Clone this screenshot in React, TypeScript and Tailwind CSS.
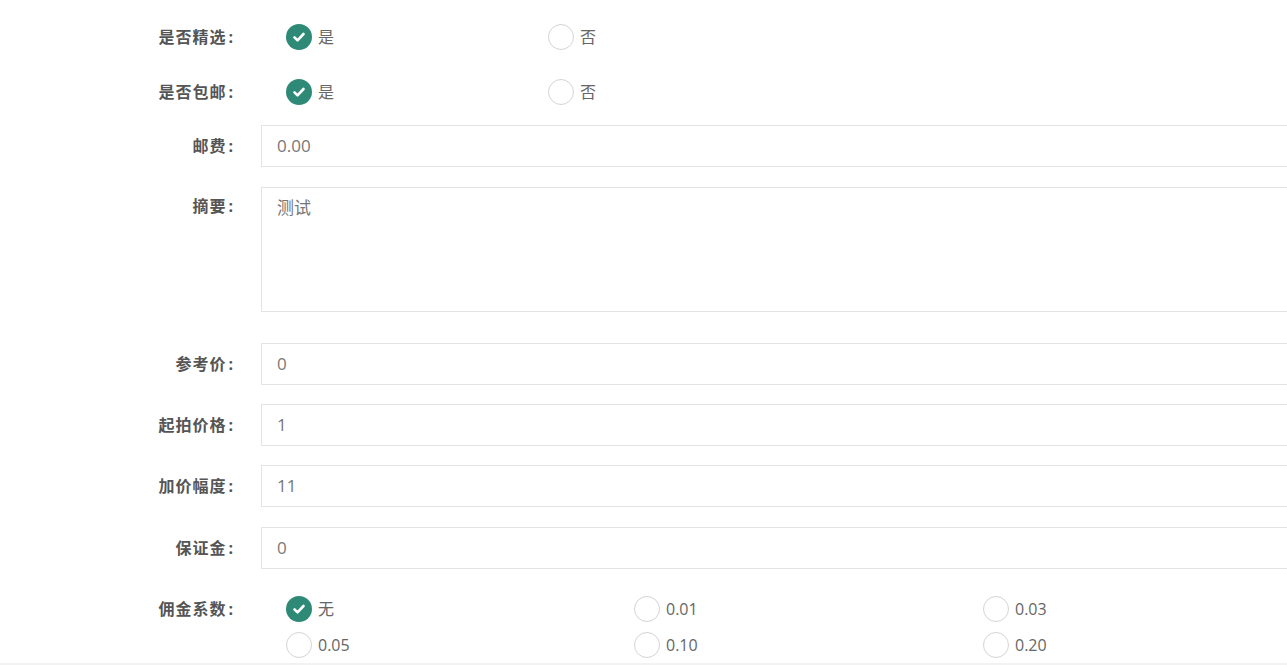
const FONT = "font-['Open_Sans','Noto_Sans_CJK_SC',sans-serif]";

function Radio({ label, checked }: { label: string; checked?: boolean }) {
  return (
    <label className="flex items-center gap-[6px] h-[26px]">
      {checked ? (
        <span className="w-[26px] h-[26px] rounded-full bg-[#2e8a76] flex items-center justify-center">
          <svg width="16" height="16" viewBox="0 0 16 16" fill="none">
            <path d="M3.5 8.3l3 3L12.5 5" stroke="#fff" strokeWidth="2.6" strokeLinecap="round" strokeLinejoin="round" />
          </svg>
        </span>
      ) : (
        <span className="w-[26px] h-[26px] rounded-full border border-[#d4d4d4] bg-white" />
      )}
      <span className="text-[16px] text-[#666]">{label}</span>
    </label>
  );
}

function Label({ children, top }: { children: string; top?: boolean }) {
  return (
    <div
      className={
        "w-[233px] shrink-0 text-right text-[16px] font-bold text-[#555] " +
        (top ? "pt-[7px]" : "")
      }
    >
      <span className="tracking-[1px]">{children.slice(0, -1)}</span>
      <span className="ml-[2px]">{children.slice(-1)}</span>
    </div>
  );
}

function InputRow({ label, value, className }: { label: string; value: string; className?: string }) {
  return (
    <div className={"flex items-center " + (className ?? "")}>
      <Label>{label}</Label>
      <div className="ml-[28px] w-[1100px] shrink-0 h-[42px] border border-[#e3e3e3] flex items-center px-[15px] text-[17px] text-[#777]">
        {value}
      </div>
    </div>
  );
}

export default function App() {
  const rates = ["无", "0.01", "0.03", "0.05", "0.10", "0.20"];
  return (
    <div className={"w-[1287px] h-[665px] overflow-hidden bg-white flex flex-col " + FONT}>
      <div className="flex-1 pt-[24px]">
        <div className="flex items-center">
          <Label>是否精选:</Label>
          <div className="ml-[53px] flex">
            <div className="w-[262px]">
              <Radio label="是" checked />
            </div>
            <Radio label="否" />
          </div>
        </div>
        <div className="flex items-center mt-[29px]">
          <Label>是否包邮:</Label>
          <div className="ml-[53px] flex">
            <div className="w-[262px]">
              <Radio label="是" checked />
            </div>
            <Radio label="否" />
          </div>
        </div>
        <InputRow label="邮费:" value="0.00" className="mt-[20px]" />
        <div className="flex items-start mt-[20px]">
          <Label top>摘要:</Label>
          <div className="ml-[28px] w-[1100px] shrink-0 h-[125px] border border-[#e3e3e3] px-[15px] pt-[7px] text-[17px] text-[#777]">
            测试
          </div>
        </div>
        <InputRow label="参考价:" value="0" className="mt-[31px]" />
        <InputRow label="起拍价格:" value="1" className="mt-[19px]" />
        <InputRow label="加价幅度:" value="11" className="mt-[19px]" />
        <InputRow label="保证金:" value="0" className="mt-[20px]" />
        <div className="flex items-start mt-[27px]">
          <div className="h-[26px] flex items-center">
            <Label>佣金系数:</Label>
          </div>
          <div className="ml-[53px] grid grid-cols-[348px_349px_200px] gap-y-[10px]">
            {rates.map((r, i) => (
              <Radio key={r} label={r} checked={i === 0} />
            ))}
          </div>
        </div>
      </div>
      <div className="h-[2px] bg-[#f2f2f2]" />
    </div>
  );
}
